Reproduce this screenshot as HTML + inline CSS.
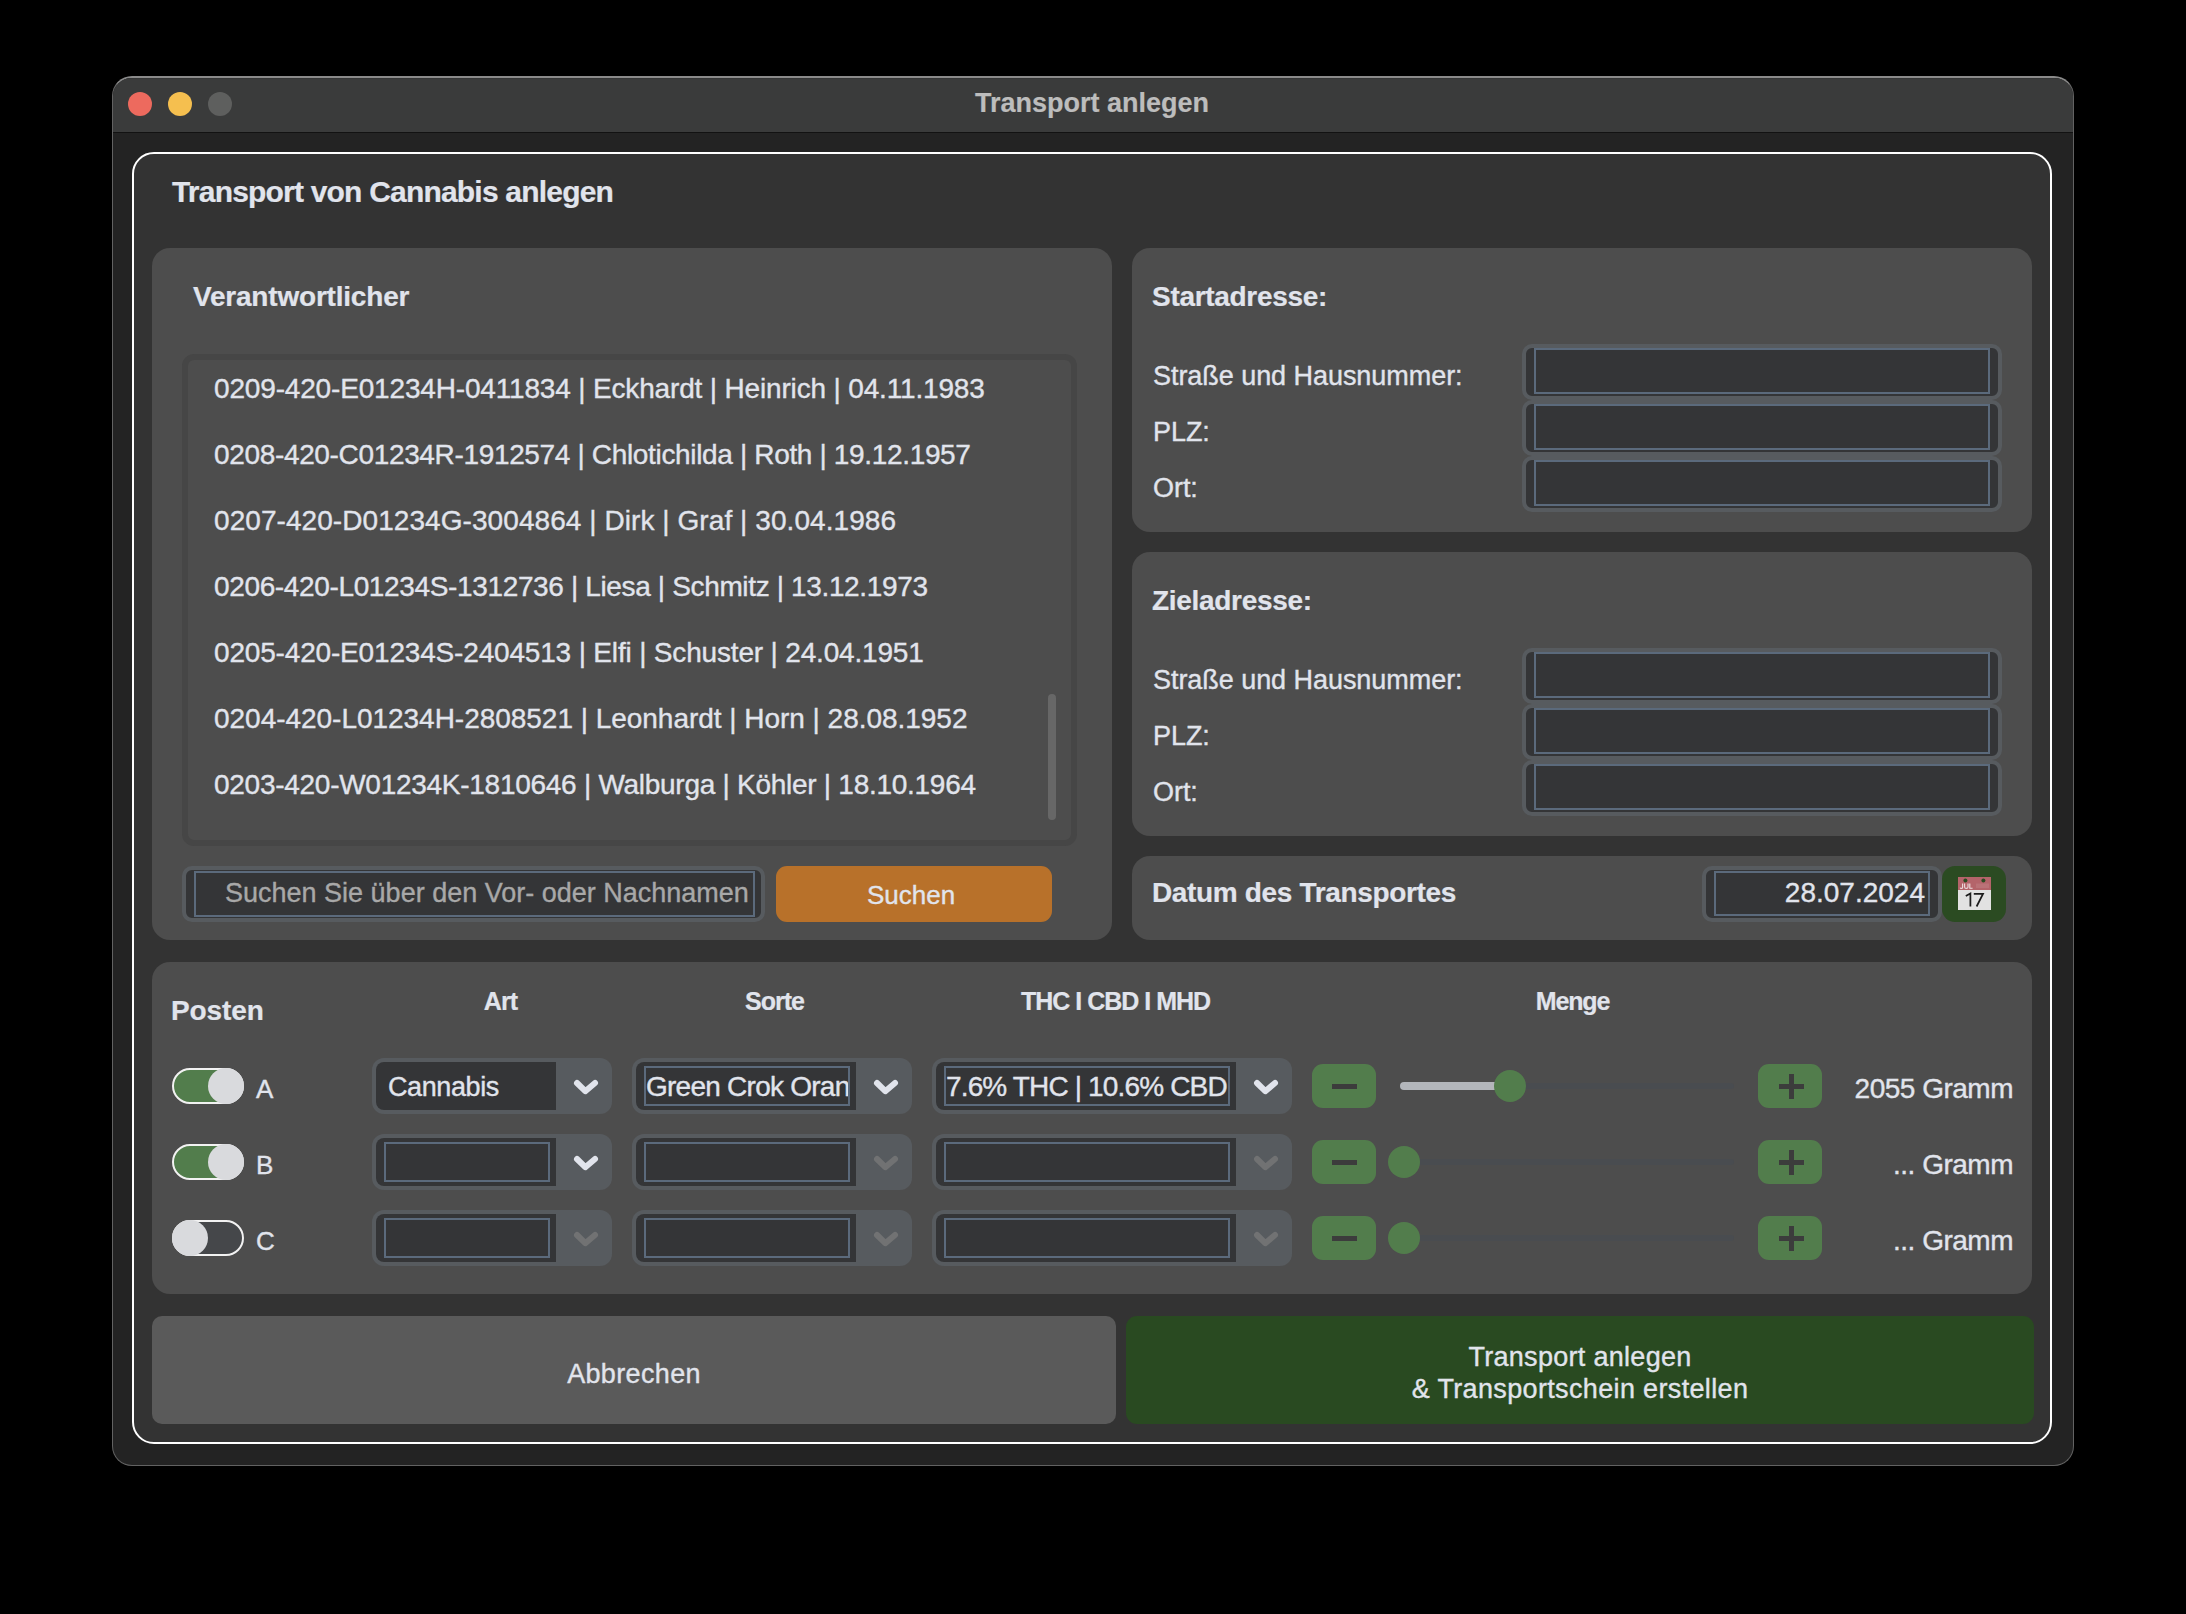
<!DOCTYPE html>
<html><head><meta charset="utf-8">
<style>
*{margin:0;padding:0;box-sizing:border-box}
html,body{width:2186px;height:1614px;background:#000;overflow:hidden}
body{position:relative;font-family:"Liberation Sans",sans-serif;color:#e1e4ec}
.t{-webkit-text-stroke:0.35px currentColor}
.t.b,.t.hd{-webkit-text-stroke:0.2px currentColor}
.a{position:absolute}
.t{position:absolute;white-space:nowrap;line-height:1}
.b{font-weight:700}
#win{left:112px;top:76px;width:1962px;height:1390px;border-radius:20px;background:#232323;border:1px solid #626262;border-top:2px solid #8a8a8a;overflow:hidden}
#tb{left:0;top:0;width:1960px;height:55px;background:#3a3b3b;border-bottom:1px solid #121212;box-shadow:inset 0 1px #343535}
.dot{position:absolute;width:24px;height:24px;border-radius:50%;top:14px}
#frame{left:132px;top:152px;width:1920px;height:1292px;border:2px solid #fff;border-radius:22px;background:#333333}
.panel{position:absolute;background:#4d4d4d;border-radius:18px}
.fld{position:absolute;border:4px solid #575b5f;border-radius:10px;background:#343537}
.fld .bl{position:absolute;left:8px;right:8px;top:0;bottom:0;border:2px solid #5b6a7c}
.lbl{font-size:27px}
.hd{font-size:28px;font-weight:700}
</style></head><body>
<div id="win" class="a">
  <div id="tb" class="a">
    <div class="dot" style="left:15px;background:#ed6a5e"></div>
    <div class="dot" style="left:55px;background:#f5bf4f"></div>
    <div class="dot" style="left:95px;background:#5e5f5e"></div>
  </div>
</div>
<div class="t b" style="left:975px;top:90px;font-size:27px;color:#bdbdbd;letter-spacing:0">Transport anlegen</div>
<div id="frame" class="a"></div>
<div class="t b" style="left:172px;top:177px;font-size:30px;letter-spacing:-0.8px">Transport von Cannabis anlegen</div>

<!-- left panel -->
<div class="panel" style="left:152px;top:248px;width:960px;height:692px"></div>
<div class="t hd" style="left:193px;top:283px;letter-spacing:-0.2px">Verantwortlicher</div>
<!-- list -->
<div class="a" style="left:182px;top:354px;width:895px;height:492px;border:6px solid #464646;border-radius:12px;background:#4d4d4d"></div>
<div class="t" style="left:214px;top:375px;font-size:28px;letter-spacing:-0.166px">0209-420-E01234H-0411834 | Eckhardt | Heinrich | 04.11.1983</div>
<div class="t" style="left:214px;top:441px;font-size:28px;letter-spacing:-0.343px">0208-420-C01234R-1912574 | Chlotichilda | Roth | 19.12.1957</div>
<div class="t" style="left:214px;top:507px;font-size:28px;letter-spacing:0.066px">0207-420-D01234G-3004864 | Dirk | Graf | 30.04.1986</div>
<div class="t" style="left:214px;top:573px;font-size:28px;letter-spacing:-0.357px">0206-420-L01234S-1312736 | Liesa | Schmitz | 13.12.1973</div>
<div class="t" style="left:214px;top:639px;font-size:28px;letter-spacing:-0.174px">0205-420-E01234S-2404513 | Elfi | Schuster | 24.04.1951</div>
<div class="t" style="left:214px;top:705px;font-size:28px;letter-spacing:-0.029px">0204-420-L01234H-2808521 | Leonhardt | Horn | 28.08.1952</div>
<div class="t" style="left:214px;top:771px;font-size:28px;letter-spacing:-0.273px">0203-420-W01234K-1810646 | Walburga | Köhler | 18.10.1964</div>
<div class="a" style="left:1048px;top:694px;width:8px;height:126px;border-radius:4px;background:#676767"></div>
<!-- search -->
<div class="fld" style="left:182px;top:866px;width:583px;height:56px;border-radius:10px"><div class="bl" style="left:8px;right:6px;top:1px;bottom:1px"></div></div>
<div class="t" style="left:225px;top:880px;font-size:27px;color:#a8a8a8">Suchen Sie über den Vor- oder Nachnamen</div>
<div class="a" style="left:776px;top:866px;width:276px;height:56px;border-radius:11px;background:#b8712a"></div>
<div class="t" style="left:773px;width:276px;text-align:center;top:882px;font-size:26px">Suchen</div>
<!-- right panels -->
<div class="panel" style="left:1132px;top:248px;width:900px;height:284px"></div>
<div class="t hd" style="left:1152px;top:283px;letter-spacing:-0.3px">Startadresse:</div>
<div class="t lbl" style="left:1153px;top:363px;letter-spacing:-0.05px">Straße und Hausnummer:</div>
<div class="fld" style="left:1522px;top:344px;width:480px;height:56px"><div class="bl" style="bottom:2px"></div></div>
<div class="t lbl" style="left:1153px;top:419px;letter-spacing:-0.05px">PLZ:</div>
<div class="fld" style="left:1522px;top:400px;width:480px;height:56px"><div class="bl" style="bottom:2px"></div></div>
<div class="t lbl" style="left:1153px;top:475px;letter-spacing:-0.05px">Ort:</div>
<div class="fld" style="left:1522px;top:456px;width:480px;height:56px"><div class="bl" style="bottom:2px"></div></div>
<div class="panel" style="left:1132px;top:552px;width:900px;height:284px"></div>
<div class="t hd" style="left:1152px;top:587px;letter-spacing:-0.3px">Zieladresse:</div>
<div class="t lbl" style="left:1153px;top:667px;letter-spacing:-0.05px">Straße und Hausnummer:</div>
<div class="fld" style="left:1522px;top:648px;width:480px;height:56px"><div class="bl" style="bottom:2px"></div></div>
<div class="t lbl" style="left:1153px;top:723px;letter-spacing:-0.05px">PLZ:</div>
<div class="fld" style="left:1522px;top:704px;width:480px;height:56px"><div class="bl" style="bottom:2px"></div></div>
<div class="t lbl" style="left:1153px;top:779px;letter-spacing:-0.05px">Ort:</div>
<div class="fld" style="left:1522px;top:760px;width:480px;height:56px"><div class="bl" style="bottom:2px"></div></div>
<div class="panel" style="left:1132px;top:856px;width:900px;height:84px"></div>
<div class="t hd" style="left:1152px;top:879px;letter-spacing:-0.35px">Datum des Transportes</div>
<div class="fld" style="left:1702px;top:866px;width:240px;height:56px"><div class="bl" style="left:8px;right:8px;top:1px;bottom:2px"></div></div>
<div class="t" style="left:1702px;width:223px;text-align:right;top:879px;font-size:28px">28.07.2024</div>
<div class="a" style="left:1942px;top:866px;width:64px;height:56px;border-radius:13px;background:#2b4b22"></div>
<svg class="a" style="left:1958px;top:877px" width="33" height="33" viewBox="0 0 33 33">
<rect x="0" y="0" width="33" height="13" fill="#b4646a"/>
<rect x="0" y="13" width="33" height="20" fill="#e2e2e2"/>
<circle cx="7.4" cy="3.4" r="2" fill="#2b4b22"/><circle cx="25.4" cy="3.4" r="2" fill="#2b4b22"/>
<path d="M4.6 6.6 V10.4 Q4.6 11.4 3.2 11.4 Q2.3 11.4 2.2 10.6 M6.6 6.6 V10 Q6.6 11.4 8.3 11.4 Q10 11.4 10 10 V6.6 M11.8 6.6 V11.2 H14.6" fill="none" stroke="#ecdcdd" stroke-width="1.1"/>
<rect x="18" y="6.5" width="13" height="4.5" fill="#c08388" opacity="0.45"/>
<path d="M7.8 19 L12.4 16.4 L12.4 29.5 M15.8 16.9 L25 16.9 L18.6 29.5" fill="none" stroke="#1c1c1c" stroke-width="1.75" stroke-linejoin="miter"/>
</svg>
<!-- posten panel -->
<div class="panel" style="left:152px;top:962px;width:1880px;height:332px"></div>
<div class="t hd" style="left:171px;top:997px;font-size:28px;letter-spacing:-0.1px">Posten</div>
<div class="t b" style="left:440px;width:121px;text-align:center;top:989px;font-size:25px;letter-spacing:-0.8px">Art</div>
<div class="t b" style="left:674px;width:201px;text-align:center;top:989px;font-size:25px;letter-spacing:-1px">Sorte</div>
<div class="t b" style="left:965px;width:301px;text-align:center;top:989px;font-size:25px;letter-spacing:-1px">THC I CBD I MHD</div>
<div class="t b" style="left:1472px;width:201px;text-align:center;top:989px;font-size:25px;letter-spacing:-1.1px">Menge</div>
<div class="a" style="left:172px;top:1068px;width:72px;height:36px;border-radius:18px;border:2px solid #f2f2f2;background:#527d4c"></div>
<div class="a" style="left:208px;top:1068px;width:36px;height:36px;border-radius:18px;background:#d9dadd"></div>
<div class="t" style="left:256px;top:1076px;font-size:26px">A</div>
<div class="a" style="left:372px;top:1058px;width:240px;height:56px;border-radius:12px;background:#575b5f"></div>
<div class="a" style="left:376px;top:1062px;width:180px;height:48px;border-radius:8px 0 0 8px;background:#343537;overflow:hidden"><div class="t" style="left:12px;top:12px;font-size:27px;letter-spacing:-0.4px">Cannabis</div></div>
<svg class="a" style="left:572px;top:1072px" width="28" height="28" viewBox="0 0 28 28"><path d="M5 11 L13.3 19.2 L23 11" fill="none" stroke="#e1e4ec" stroke-width="6" stroke-linecap="round" stroke-linejoin="round"/></svg>
<div class="a" style="left:632px;top:1058px;width:280px;height:56px;border-radius:12px;background:#575b5f"></div>
<div class="a" style="left:636px;top:1062px;width:220px;height:48px;border-radius:8px 0 0 8px;background:#343537;overflow:hidden"><div class="a" style="left:8px;right:6px;top:4px;bottom:4px;border:2px solid #5b6a7c;overflow:hidden"><div class="t" style="left:0px;top:5px;font-size:28px;letter-spacing:-0.75px">Green Crok Orange</div></div></div>
<svg class="a" style="left:872px;top:1072px" width="28" height="28" viewBox="0 0 28 28"><path d="M5 11 L13.3 19.2 L23 11" fill="none" stroke="#e1e4ec" stroke-width="6" stroke-linecap="round" stroke-linejoin="round"/></svg>
<div class="a" style="left:932px;top:1058px;width:360px;height:56px;border-radius:12px;background:#575b5f"></div>
<div class="a" style="left:936px;top:1062px;width:300px;height:48px;border-radius:8px 0 0 8px;background:#343537;overflow:hidden"><div class="a" style="left:8px;right:6px;top:4px;bottom:4px;border:2px solid #5b6a7c;overflow:hidden"><div class="t" style="left:0px;top:5px;font-size:28px;letter-spacing:-0.85px">7.6% THC | 10.6% CBD</div></div></div>
<svg class="a" style="left:1252px;top:1072px" width="28" height="28" viewBox="0 0 28 28"><path d="M5 11 L13.3 19.2 L23 11" fill="none" stroke="#e1e4ec" stroke-width="6" stroke-linecap="round" stroke-linejoin="round"/></svg>
<div class="a" style="left:1312px;top:1064px;width:64px;height:44px;border-radius:11px;background:#527d4c"></div>
<div class="a" style="left:1332px;top:1084px;width:25px;height:5px;background:#3c3c3c"></div>
<div class="a" style="left:1758px;top:1064px;width:64px;height:44px;border-radius:11px;background:#527d4c"></div>
<div class="a" style="left:1779px;top:1084px;width:25px;height:5px;background:#3c3c3c"></div>
<div class="a" style="left:1789px;top:1074px;width:5px;height:25px;background:#3c3c3c"></div>
<div class="a" style="left:1400px;top:1083px;width:334px;height:6px;border-radius:3px;background:#494c50"></div>
<div class="a" style="left:1400px;top:1082px;width:112px;height:8px;border-radius:4px;background:#b3b6bb"></div>
<div class="a" style="left:1494px;top:1070px;width:32px;height:32px;border-radius:16px;background:#527d4c"></div>
<div class="t" style="left:1700px;width:313px;text-align:right;top:1075px;font-size:28px;letter-spacing:-0.5px">2055 Gramm</div>
<div class="a" style="left:172px;top:1144px;width:72px;height:36px;border-radius:18px;border:2px solid #f2f2f2;background:#527d4c"></div>
<div class="a" style="left:208px;top:1144px;width:36px;height:36px;border-radius:18px;background:#d9dadd"></div>
<div class="t" style="left:256px;top:1152px;font-size:26px">B</div>
<div class="a" style="left:372px;top:1134px;width:240px;height:56px;border-radius:12px;background:#575b5f"></div>
<div class="a" style="left:376px;top:1138px;width:180px;height:48px;border-radius:8px 0 0 8px;background:#343537;overflow:hidden"><div class="a" style="left:8px;right:6px;top:4px;bottom:4px;border:2px solid #5b6a7c;overflow:hidden"></div></div>
<svg class="a" style="left:572px;top:1148px" width="28" height="28" viewBox="0 0 28 28"><path d="M5 11 L13.3 19.2 L23 11" fill="none" stroke="#e1e4ec" stroke-width="6" stroke-linecap="round" stroke-linejoin="round"/></svg>
<div class="a" style="left:632px;top:1134px;width:280px;height:56px;border-radius:12px;background:#575b5f"></div>
<div class="a" style="left:636px;top:1138px;width:220px;height:48px;border-radius:8px 0 0 8px;background:#343537;overflow:hidden"><div class="a" style="left:8px;right:6px;top:4px;bottom:4px;border:2px solid #5b6a7c;overflow:hidden"></div></div>
<svg class="a" style="left:872px;top:1148px" width="28" height="28" viewBox="0 0 28 28"><path d="M5 11 L13.3 19.2 L23 11" fill="none" stroke="#717273" stroke-width="6" stroke-linecap="round" stroke-linejoin="round"/></svg>
<div class="a" style="left:932px;top:1134px;width:360px;height:56px;border-radius:12px;background:#575b5f"></div>
<div class="a" style="left:936px;top:1138px;width:300px;height:48px;border-radius:8px 0 0 8px;background:#343537;overflow:hidden"><div class="a" style="left:8px;right:6px;top:4px;bottom:4px;border:2px solid #5b6a7c;overflow:hidden"></div></div>
<svg class="a" style="left:1252px;top:1148px" width="28" height="28" viewBox="0 0 28 28"><path d="M5 11 L13.3 19.2 L23 11" fill="none" stroke="#717273" stroke-width="6" stroke-linecap="round" stroke-linejoin="round"/></svg>
<div class="a" style="left:1312px;top:1140px;width:64px;height:44px;border-radius:11px;background:#527d4c"></div>
<div class="a" style="left:1332px;top:1160px;width:25px;height:5px;background:#3c3c3c"></div>
<div class="a" style="left:1758px;top:1140px;width:64px;height:44px;border-radius:11px;background:#527d4c"></div>
<div class="a" style="left:1779px;top:1160px;width:25px;height:5px;background:#3c3c3c"></div>
<div class="a" style="left:1789px;top:1150px;width:5px;height:25px;background:#3c3c3c"></div>
<div class="a" style="left:1400px;top:1159px;width:334px;height:6px;border-radius:3px;background:#494c50"></div>
<div class="a" style="left:1388px;top:1146px;width:32px;height:32px;border-radius:16px;background:#527d4c"></div>
<div class="t" style="left:1700px;width:313px;text-align:right;top:1151px;font-size:28px;letter-spacing:-0.5px">... Gramm</div>
<div class="a" style="left:172px;top:1220px;width:72px;height:36px;border-radius:18px;border:2px solid #f2f2f2;background:#45474a"></div>
<div class="a" style="left:172px;top:1220px;width:36px;height:36px;border-radius:18px;background:#d9dadd"></div>
<div class="t" style="left:256px;top:1228px;font-size:26px">C</div>
<div class="a" style="left:372px;top:1210px;width:240px;height:56px;border-radius:12px;background:#575b5f"></div>
<div class="a" style="left:376px;top:1214px;width:180px;height:48px;border-radius:8px 0 0 8px;background:#343537;overflow:hidden"><div class="a" style="left:8px;right:6px;top:4px;bottom:4px;border:2px solid #5b6a7c;overflow:hidden"></div></div>
<svg class="a" style="left:572px;top:1224px" width="28" height="28" viewBox="0 0 28 28"><path d="M5 11 L13.3 19.2 L23 11" fill="none" stroke="#717273" stroke-width="6" stroke-linecap="round" stroke-linejoin="round"/></svg>
<div class="a" style="left:632px;top:1210px;width:280px;height:56px;border-radius:12px;background:#575b5f"></div>
<div class="a" style="left:636px;top:1214px;width:220px;height:48px;border-radius:8px 0 0 8px;background:#343537;overflow:hidden"><div class="a" style="left:8px;right:6px;top:4px;bottom:4px;border:2px solid #5b6a7c;overflow:hidden"></div></div>
<svg class="a" style="left:872px;top:1224px" width="28" height="28" viewBox="0 0 28 28"><path d="M5 11 L13.3 19.2 L23 11" fill="none" stroke="#717273" stroke-width="6" stroke-linecap="round" stroke-linejoin="round"/></svg>
<div class="a" style="left:932px;top:1210px;width:360px;height:56px;border-radius:12px;background:#575b5f"></div>
<div class="a" style="left:936px;top:1214px;width:300px;height:48px;border-radius:8px 0 0 8px;background:#343537;overflow:hidden"><div class="a" style="left:8px;right:6px;top:4px;bottom:4px;border:2px solid #5b6a7c;overflow:hidden"></div></div>
<svg class="a" style="left:1252px;top:1224px" width="28" height="28" viewBox="0 0 28 28"><path d="M5 11 L13.3 19.2 L23 11" fill="none" stroke="#717273" stroke-width="6" stroke-linecap="round" stroke-linejoin="round"/></svg>
<div class="a" style="left:1312px;top:1216px;width:64px;height:44px;border-radius:11px;background:#527d4c"></div>
<div class="a" style="left:1332px;top:1236px;width:25px;height:5px;background:#3c3c3c"></div>
<div class="a" style="left:1758px;top:1216px;width:64px;height:44px;border-radius:11px;background:#527d4c"></div>
<div class="a" style="left:1779px;top:1236px;width:25px;height:5px;background:#3c3c3c"></div>
<div class="a" style="left:1789px;top:1226px;width:5px;height:25px;background:#3c3c3c"></div>
<div class="a" style="left:1400px;top:1235px;width:334px;height:6px;border-radius:3px;background:#494c50"></div>
<div class="a" style="left:1388px;top:1222px;width:32px;height:32px;border-radius:16px;background:#527d4c"></div>
<div class="t" style="left:1700px;width:313px;text-align:right;top:1227px;font-size:28px;letter-spacing:-0.5px">... Gramm</div>
<!-- bottom buttons -->
<div class="a" style="left:152px;top:1316px;width:964px;height:108px;border-radius:10px;background:#5a5a5a"></div>
<div class="t" style="left:152px;width:964px;text-align:center;top:1361px;font-size:27px;letter-spacing:0.35px">Abbrechen</div>
<div class="a" style="left:1126px;top:1316px;width:908px;height:108px;border-radius:11px;background:#294a21"></div>
<div class="t" style="left:1126px;width:908px;text-align:center;top:1344px;font-size:27px;letter-spacing:0.3px">Transport anlegen</div>
<div class="t" style="left:1126px;width:908px;text-align:center;top:1376px;font-size:27px;letter-spacing:0.35px">&amp; Transportschein erstellen</div>
</body></html>
